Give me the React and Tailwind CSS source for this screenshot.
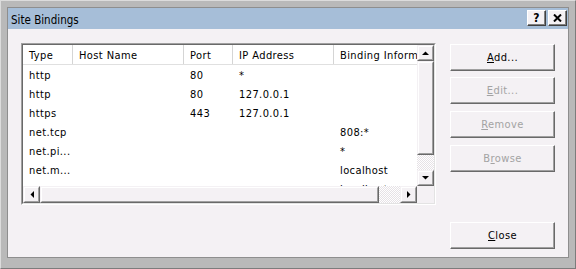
import React from 'react';

// --- list contents ---
const columns = [
    { title: 'Type', w: 'w-[50px]' },
    { title: 'Host Name', w: 'w-[111px]' },
    { title: 'Port', w: 'w-[49px]' },
    { title: 'IP Address', w: 'w-[101px]' },
    { title: 'Binding Information', w: 'w-[120px]' },
];

const rows = [
    ['http', '', '80', '*', ''],
    ['http', '', '80', '127.0.0.1', ''],
    ['https', '', '443', '127.0.0.1', ''],
    ['net.tcp', '', '', '', '808:*'],
    ['net.pi...', '', '', '', '*'],
    ['net.m...', '', '', '', 'localhost'],
    ['msmq...', '', '', '', 'localhost'],
];

const Arrow = ({ dir }) => {
    const pts = {
        up: '0,4 7,4 3.5,0.5',
        down: '0,0 7,0 3.5,3.5',
        left: '4,0 4,7 0.5,3.5',
        right: '0,0 0,7 3.5,3.5',
    }[dir];
    const vertical = dir === 'up' || dir === 'down';
    return (
        <svg width={vertical ? 7 : 4} height={vertical ? 4 : 7} viewBox={vertical ? '0 0 7 4' : '0 0 4 7'}>
            <polygon points={pts} fill="#000" />
        </svg>
    );
};

// raised 3D box used by scrollbar arrows and thumbs
const Raised = ({ className = '', children }) => (
    <div className={`bg-[#f4f1f4] border border-t-[#f4f1f4] border-l-[#f4f1f4] border-r-[#696969] border-b-[#696969] ${className}`}>
        <div className="w-full h-full flex items-center justify-center border border-t-white border-l-white border-r-[#a0a0a0] border-b-[#a0a0a0]">
            {children}
        </div>
    </div>
);

const Track = ({ className = '' }) => (
    <div className={`bg-[repeating-conic-gradient(#ffffff_0_25%,#e6e2e6_0_50%)] bg-[length:2px_2px] ${className}`} />
);

const DialogButton = ({ children, disabled, className = '' }) => (
    <div
        className={`h-[27px] w-[105px] flex items-center justify-center pt-[1px] bg-[#f4f1f4] border border-t-white border-l-white border-r-[#696969] border-b-[#696969] shadow-[inset_-1px_-1px_0_#a0a0a0] ${disabled ? 'text-[#a3a3a3]' : 'text-black'} ${className}`}
    >
        {children}
    </div>
);

const TitleButton = ({ children }) => (
    <div className="w-[19px] h-[16px] bg-[#f4f1f4] border border-t-white border-l-white border-r-[#404040] border-b-[#404040] shadow-[inset_-1px_-1px_0_#808080] flex items-center justify-center">
        {children}
    </div>
);

export default function App() {
    return (
        <div className="w-[576px] h-[269px] bg-[#b9b9b9] border border-t-[#dcdcdc] border-l-[#dcdcdc] border-r-[#7c7c7c] border-b-[#7c7c7c] pt-[6px] pl-[6px] pr-[6px] pb-[10px] font-['DejaVu_Sans_Condensed','Liberation_Sans',sans-serif] text-[11px] tracking-[0.4px] text-black overflow-hidden">
            <div className="w-full h-full flex flex-col border border-[#8e8e8e]">
                {/* Title bar */}
                <div className="h-[21px] shrink-0 bg-[#a6bed8] flex items-start pl-[3px] pr-[1px]">
                    <span className="mt-[4px] text-[11.5px] tracking-normal">Site Bindings</span>
                    <div className="ml-auto mt-[2px] flex gap-[2px]">
                        <TitleButton>
                            <span className="font-bold text-[12px] leading-none tracking-normal">?</span>
                        </TitleButton>
                        <TitleButton>
                            <svg width="9" height="8" viewBox="0 0 9 8">
                                <path d="M1 0.5 L8 7.5 M8 0.5 L1 7.5" stroke="#000" strokeWidth="2" />
                            </svg>
                        </TitleButton>
                    </div>
                </div>

                {/* Body */}
                <div className="flex-1 bg-[#f4f1f4] flex pl-[13px] pr-[13px] pt-[14px] pb-[8px]">
                    {/* Bindings list */}
                    <div className="w-[415px] h-[162px] border border-t-[#a0a0a0] border-l-[#a0a0a0] border-r-white border-b-white">
                        <div className="w-full h-full border border-t-[#696969] border-l-[#696969] border-r-[#e3e3e3] border-b-[#e3e3e3] bg-white flex flex-col">
                            <div className="flex h-[141px]">
                                <div className="w-[394px] overflow-hidden">
                                    <div className="flex h-[20px] border-b border-[#e0e0e0] w-max">
                                        {columns.map((c) => (
                                            <div key={c.title} className={`${c.w} shrink-0 border-r border-[#d5d5d5] pl-[6px] pt-[3px] flex items-center whitespace-nowrap overflow-hidden`}>
                                                {c.title}
                                            </div>
                                        ))}
                                    </div>
                                    {rows.map((r, i) => (
                                        <div key={i} className="flex h-[19px] w-max">
                                            {r.map((cell, j) => (
                                                <div key={j} className={`${columns[j].w} shrink-0 pl-[6px] pt-[3px] flex items-center whitespace-nowrap overflow-hidden`}>
                                                    {cell}
                                                </div>
                                            ))}
                                        </div>
                                    ))}
                                </div>
                                {/* Vertical scrollbar */}
                                <div className="w-[17px] flex flex-col">
                                    <Raised className="h-[16px]"><Arrow dir="up" /></Raised>
                                    <Raised className="h-[94px]" />
                                    <Track className="flex-1" />
                                    <Raised className="h-[16px]"><Arrow dir="down" /></Raised>
                                </div>
                            </div>
                            {/* Horizontal scrollbar */}
                            <div className="flex h-[17px]">
                                <div className="w-[394px] flex">
                                    <Raised className="w-[17px]"><Arrow dir="left" /></Raised>
                                    <Raised className="w-[339px]" />
                                    <Track className="flex-1" />
                                    <Raised className="w-[17px]"><Arrow dir="right" /></Raised>
                                </div>
                                <div className="flex-1 bg-[#f4f1f4]" />
                            </div>
                        </div>
                    </div>

                    {/* Buttons */}
                    <div className="ml-[14px] flex flex-col pt-[1px]">
                        <DialogButton><span><u className="underline-offset-1">A</u>dd...</span></DialogButton>
                        <DialogButton disabled className="mt-[6px]"><span><u className="underline-offset-1">E</u>dit...</span></DialogButton>
                        <DialogButton disabled className="mt-[7px]"><span><u className="underline-offset-1">R</u>emove</span></DialogButton>
                        <DialogButton disabled className="mt-[7px]"><span>B<u className="underline-offset-1">r</u>owse</span></DialogButton>
                        <DialogButton className="mt-auto"><span><u className="underline-offset-1">C</u>lose</span></DialogButton>
                    </div>
                </div>
            </div>
        </div>
    );
}
